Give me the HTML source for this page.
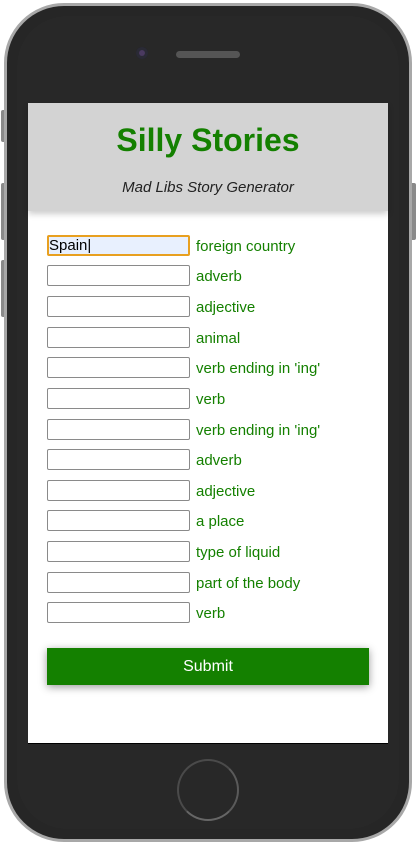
<!DOCTYPE html>
<html><head><style>
body{margin:0;width:417px;height:845px;background:#fff;position:relative;overflow:hidden;font-family:"Liberation Sans",Arial,sans-serif}
.sb{position:absolute;background:#8a8a8a;width:6px;border-radius:2px}
.phone{position:absolute;left:4px;top:3px;width:402px;height:833px;background:#262626;border:3px solid #a8a8a8;border-radius:60px}
.inner{position:absolute;left:10px;top:10px;right:10px;bottom:10px;border-radius:50px;background:#282828}
.cam{position:absolute;left:136px;top:47px;width:12px;height:12px;border-radius:50%;background:#1c1c24;box-shadow:inset 0 0 0 3px #2a2a35}
.cam:after{content:"";position:absolute;left:3px;top:3px;width:6px;height:6px;border-radius:50%;background:#4a3a60}
.spk{position:absolute;left:176px;top:51px;width:64px;height:7px;border-radius:4px;background:#555}
.screen{position:absolute;left:28px;top:103px;width:360px;height:640px;background:#fff;border-bottom:1px solid #000}
.hdr{height:108px;background:#d3d3d3;box-shadow:0 3px 6px rgba(0,0,0,.2);text-align:center;position:relative}
h1{margin:0;position:absolute;top:19px;width:100%;font-size:32px;color:#148000;font-weight:bold}
.sub{position:absolute;top:76px;width:100%;font-style:italic;font-size:15px;color:#222}
.row{position:absolute;left:19px;height:21px}
.in{position:absolute;left:0;top:0;width:141px;height:19px;border:1px solid #8a8a8a;border-radius:2px;background:#fff;font-size:15px;line-height:19px}
.lb{position:absolute;left:149px;top:1px;font-size:15px;color:#148000;line-height:22px;white-space:nowrap}
.btn{position:absolute;left:19px;top:545px;width:322px;height:37px;background:#148000;box-shadow:0 2px 8px rgba(0,0,0,.4);color:#fff;font-size:16px;text-align:center;line-height:38px}
.home{position:absolute;left:177px;top:759px;width:58px;height:58px;border-radius:50%;border:2px solid #4a4a4a;border-bottom-color:#666;border-right-color:#5a5a5a}
</style></head><body>
<div class="sb" style="left:1px;top:110px;height:32px"></div>
<div class="sb" style="left:1px;top:183px;height:57px"></div>
<div class="sb" style="left:1px;top:260px;height:57px"></div>
<div class="sb" style="left:410px;top:183px;height:57px"></div>
<div class="phone"><div class="inner"></div></div>
<div class="cam"></div><div class="spk"></div>
<div class="home"></div>
<div class="screen">
<div class="hdr"><h1>Silly Stories</h1><div class="sub">Mad Libs Story Generator</div></div>
<div class="row" style="top:132px"><div class="in" style="border:2px solid #e8a020;width:139px;height:17px;background:#e8f0fe;line-height:18px">Spain|</div><div class="lb">foreign country</div></div>
<div class="row" style="top:162px"><div class="in"></div><div class="lb">adverb</div></div>
<div class="row" style="top:193px"><div class="in"></div><div class="lb">adjective</div></div>
<div class="row" style="top:224px"><div class="in"></div><div class="lb">animal</div></div>
<div class="row" style="top:254px"><div class="in"></div><div class="lb">verb ending in 'ing'</div></div>
<div class="row" style="top:285px"><div class="in"></div><div class="lb">verb</div></div>
<div class="row" style="top:316px"><div class="in"></div><div class="lb">verb ending in 'ing'</div></div>
<div class="row" style="top:346px"><div class="in"></div><div class="lb">adverb</div></div>
<div class="row" style="top:377px"><div class="in"></div><div class="lb">adjective</div></div>
<div class="row" style="top:407px"><div class="in"></div><div class="lb">a place</div></div>
<div class="row" style="top:438px"><div class="in"></div><div class="lb">type of liquid</div></div>
<div class="row" style="top:469px"><div class="in"></div><div class="lb">part of the body</div></div>
<div class="row" style="top:499px"><div class="in"></div><div class="lb">verb</div></div>
<div class="btn">Submit</div>
</div>
</body></html>
